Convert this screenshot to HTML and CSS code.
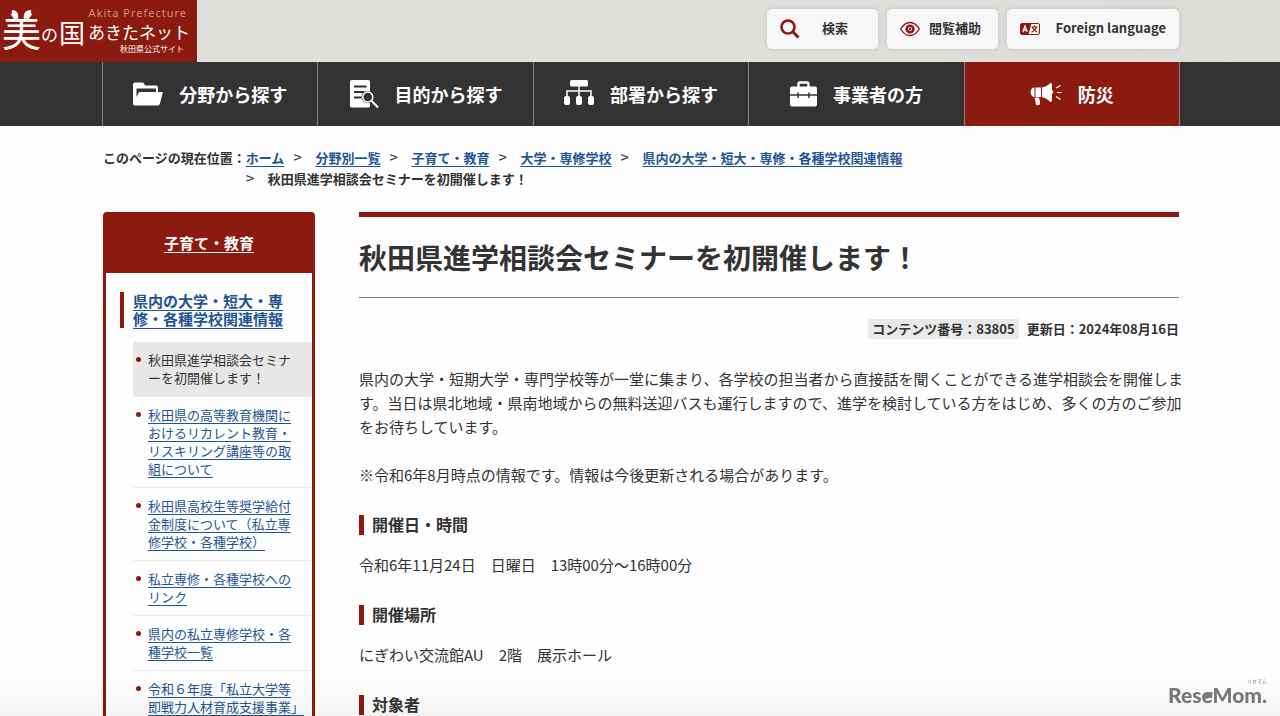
FILE: index.html
```html
<!DOCTYPE html>
<html lang="ja">
<head>
<meta charset="UTF-8">
<meta name="viewport" content="width=device-width, initial-scale=1.0">
<title>秋田県進学相談会セミナーを初開催します！</title>
<link rel="stylesheet" href="styles.css">
</head>
<body>

<header class="header">
    <a class="logo" href="#">
        <svg width="197" height="62" viewBox="0 0 197 62">
            <text class="logo-en" x="187" y="17">Akita Prefecture</text>
            <text class="logo-text" x="2" y="46" font-size="39">美</text>
            <text class="logo-text" x="41" y="41" font-size="17">の</text>
            <text class="logo-text" x="59" y="43" font-size="26">国</text>
            <text class="logo-text" x="88" y="39" font-size="17">あきたネット</text>
            <text class="logo-sub" x="120" y="52">秋田県公式サイト</text>
            <path fill="#fff" d="M12 10c5 0 7 4 6 9-5-1-7-4-6-9zM31 10c-6 0-8 4-7 9 5-1 8-4 7-9z"/>
        </svg>
    </a>
    <div class="tools">
        <button class="tool" type="button">
            <svg width="20" height="20" viewBox="0 0 20 20" fill="none" stroke="#8b1a10"><circle cx="8" cy="8" r="6.5" stroke-width="2.6"/><path d="M12.5 12.5l6 6" stroke-width="3"/></svg>
            <span>検索</span>
        </button>
        <button class="tool" type="button">
            <svg width="20" height="20" viewBox="0 0 20 20" fill="none" stroke="#8b1a10"><path d="M.7 10Q4.500 3.500 10 3.500T19.300 10Q15.500 16.500 10 16.500T.7 10z" stroke-width="1.300"/><circle cx="10" cy="10" r="3.300" stroke-width="2.600"/><circle cx="10" cy="10" r="1.200" fill="#8b1a10" stroke="none"/></svg>
            <span>閲覧補助</span>
        </button>
        <button class="tool tool-lang" type="button">
            <svg width="20" height="12" viewBox="0 0 20 12"><rect x=".5" y=".5" width="19" height="11" rx="1.500" fill="#f7f7f7" stroke="#8b1a10"/><path d="M1 .5h10.500L8.500 11.500H1z" fill="#8b1a10"/><path d="M2.800 9L5 3l2.200 6M3.600 7.200h2.800" fill="none" stroke="#fff" stroke-width="1.200"/><path d="M11.500 4h6M14.500 2.500V4M16.500 4.200Q15.500 7.500 11.500 9.200M12.500 4.200Q13.500 7.500 17.500 9.200" fill="none" stroke="#8b1a10" stroke-width="1.100"/></svg>
            <span>Foreign language</span>
        </button>
    </div>
</header>

<nav class="nav">
    <ul class="nav-list">
        <li><a href="#">
            <svg width="30" height="24" viewBox="0 0 30 24"><path fill="#fff" d="M0 2.500Q0 .5 2 .5h7.500q1 0 1.500 1l1 2h11q2 0 2 2V10h-2V6.500H3.500V15L6 10h23.500q.5 0 .3.600L27 21.500q-.5 2-2.500 2H2q-2 0-2-2z"/></svg>
            <span>分野から探す</span></a></li>
        <li><a href="#">
            <svg width="30" height="30" viewBox="0 0 30 30"><path fill="#fff" d="M2.500 1h17Q21 1 21 2.500v10a6 6 0 0 0-5 11l5 .8V27q0 1.500-1.500 1.500h-17Q1 28.500 1 27V2.500Q1 1 2.500 1z"/><path d="M5 7.500h12.500M5 13h10M5 18.500h7.500" stroke="#333" stroke-width="1.800"/><circle cx="18.800" cy="18" r="5" fill="#333" stroke="#fff" stroke-width="1.500"/><path d="M22.500 21.700l6.500 6.800" stroke="#fff" stroke-width="2"/></svg>
            <span>目的から探す</span></a></li>
        <li><a href="#">
            <svg width="30" height="30" viewBox="0 0 30 30"><g fill="#fff"><rect x="6" y="1" width="18" height="6.500" rx="1.500"/><rect x="0" y="17" width="6" height="9" rx="2"/><rect x="12" y="17" width="6" height="9" rx="2"/><rect x="24" y="17" width="6" height="9" rx="2"/></g><path d="M3 17v-5h24v5M15 7v10" fill="none" stroke="#fff" stroke-width="1.500"/></svg>
            <span>部署から探す</span></a></li>
        <li><a href="#">
            <svg width="27" height="26" viewBox="0 0 27 26"><path fill="none" stroke="#fff" stroke-width="2.400" d="M8.500 6V3q0-1.500 1.500-1.500h7q1.500 0 1.500 1.500v3"/><rect x="0" y="5.500" width="27" height="20" rx="2" fill="#fff"/><path d="M0 14h27M8 11.500v5.500M19 11.500v5.500" stroke="#333" stroke-width="1.500"/></svg>
            <span>事業者の方</span></a></li>
        <li class="nav-alert"><a href="#">
            <svg width="32" height="24" viewBox="0 0 32 24"><path fill="#fff" d="M4.500 5.500Q1 5.500.5 10q.5 5 4 5zM5.500 5.500h5.500v9.500H5.500zM12 5.500Q17 4.500 20.500 1q1.500 0 1.500 1v6q2.500 2 0 4v6.500q-.5 1.500-1.500 1.500-4-4-8.500-5zM4.500 15.500h4.500l1 4.500v2.500q-3.500 1.500-4 0z"/><path d="M26 6l4.500-2.500M27 10.500h4.500M26 14.500l4.500 3" stroke="#fff" stroke-width="1.200"/></svg>
            <span>防災</span></a></li>
    </ul>
</nav>

<div class="container">
    <div class="breadcrumb">
        <span class="breadcrumb-label">このページの現在位置：</span>
        <ol>
            <li><a href="#">ホーム</a></li>
            <li><a href="#">分野別一覧</a></li>
            <li><a href="#">子育て・教育</a></li>
            <li><a href="#">大学・専修学校</a></li>
            <li><a href="#">県内の大学・短大・専修・各種学校関連情報</a></li>
            <li>秋田県進学相談会セミナーを初開催します！</li>
        </ol>
    </div>

    <div class="columns">
        <aside class="side">
            <h2 class="side-head"><a href="#">子育て・教育</a></h2>
            <h3 class="side-sub"><a href="#">県内の大学・短大・専修・各種学校関連情報</a></h3>
            <ul class="side-list">
                <li class="current">秋田県進学相談会セミナーを初開催します！</li>
                <li><a href="#">秋田県の高等教育機関におけるリカレント教育・リスキリング講座等の取組について</a></li>
                <li><a href="#">秋田県高校生等奨学給付金制度について（私立専修学校・各種学校）</a></li>
                <li><a href="#">私立専修・各種学校へのリンク</a></li>
                <li><a href="#">県内の私立専修学校・各種学校一覧</a></li>
                <li><a href="#">令和６年度「私立大学等即戦力人材育成支援事業」</a></li>
            </ul>
        </aside>

        <main class="article">
            <h1>秋田県進学相談会セミナーを初開催します！</h1>
            <div class="meta">
                <span class="meta-number">コンテンツ番号：83805</span>
                <span>更新日：2024年08月16日</span>
            </div>
            <p class="lead">県内の大学・短期大学・専門学校等が一堂に集まり、各学校の担当者から直接話を聞くことができる進学相談会を開催しま<br>す。当日は県北地域・県南地域からの無料送迎バスも運行しますので、進学を検討している方をはじめ、多くの方のご参加<br>をお待ちしています。</p>
            <p>※令和6年8月時点の情報です。情報は今後更新される場合があります。</p>
            <h2>開催日・時間</h2>
            <p>令和6年11月24日　日曜日　13時00分～16時00分</p>
            <h2>開催場所</h2>
            <p>にぎわい交流館AU　2階　展示ホール</p>
            <h2>対象者</h2>
        </main>
    </div>
</div>

<div class="watermark">
    <span class="watermark-ruby">リセマム</span>
    <span class="watermark-name">ReseMom.</span>
</div>

</body>
</html>
```
FILE: styles.css
```css
* {
    box-sizing: border-box;
}
body {
    height: 100vh;
    margin: 0;
    overflow: hidden;
    font-family: "Noto Sans CJK JP", sans-serif;
    font-size: 15px;
    line-height: 24px;
    color: #333;
    background-color: #fdfdfd;
}
h1, h2, h3, p, ul, ol {
    margin: 0;
    padding: 0;
}
ul, ol {
    list-style: none;
}
a {
    color: #1f5593;
    text-underline-offset: 3px;
}
svg {
    display: block;
    flex: none;
}

/* Header */
.header {
    display: flex;
    justify-content: space-between;
    padding-right: 101px;
    background: linear-gradient(90deg, #dfdfdc, #e0dfdb 60%, #dddcd8);
}
.logo {
    background-color: #8b1a10;
}
.logo-en {
    font-family: "Noto Sans", sans-serif;
    font-size: 11px;
    letter-spacing: 1px;
    text-anchor: end;
    fill: #d08f88;
}
.logo-text {
    font-weight: 400;
    fill: #fff;
}
.logo-sub {
    font-size: 8px;
    fill: #fff;
}
.tools {
    display: flex;
    align-items: flex-start;
    gap: 9px;
    padding-top: 9px;
}
.tool {
    display: flex;
    align-items: center;
    gap: 9px;
    width: 111px;
    height: 40px;
    padding: 0 17px 0 13px;
    border: 0;
    border-radius: 5px;
    background-color: #f7f7f7;
    box-shadow: 0 0 5px rgba(0, 0, 0, 0.12);
    font-family: inherit;
    font-size: 13px;
    font-weight: bold;
    color: #333;
}
.tool span {
    flex: 1;
    padding-bottom: 3px;
    text-align: center;
    white-space: nowrap;
}
.tool-lang {
    width: 172px;
    padding-right: 13px;
}
.tool-lang span {
    text-align: right;
}

/* Global navigation */
.nav {
    padding: 0 100px 0 102px;
    background-color: #333;
}
.nav-list {
    display: flex;
    border-left: 1px solid #85857f;
}
.nav-list li {
    flex: 1;
    border-right: 1px solid #85857f;
}
.nav-list a {
    display: flex;
    align-items: center;
    justify-content: center;
    gap: 16px;
    height: 64px;
    font-size: 18px;
    font-weight: bold;
    color: #fff;
    text-decoration: none;
}
.nav-list .nav-alert {
    background-color: #8b1a10;
}

.container {
    padding: 21px 101px 0 103px;
}

/* Breadcrumb */
.breadcrumb {
    display: flex;
    font-size: 13px;
    font-weight: bold;
    line-height: 21px;
}
.breadcrumb-label {
    flex: none;
}
.breadcrumb ol {
    display: flex;
    flex-wrap: wrap;
    max-width: 720px;
}
.breadcrumb li + li::before {
    content: ">";
    display: inline-block;
    width: 22px;
    padding-left: 9px;
    font-size: 15px;
    font-weight: normal;
    line-height: 16px;
}
.breadcrumb li:last-child::before {
    padding-left: 0;
}

.columns {
    display: flex;
    align-items: flex-start;
    gap: 44px;
    margin-top: 23px;
}

/* Side menu */
.side {
    flex: none;
    width: 212px;
    border: 3px solid #8b1a10;
    border-radius: 4px;
}
.side-head {
    padding: 16px 0 18px;
    background-color: #8b1a10;
    font-size: 15px;
    text-align: center;
}
.side-head a {
    color: #fff;
}
.side-sub {
    margin: 19px 26px 14px 14px;
    padding-left: 9px;
    border-left: 4px solid #8b1a10;
    font-size: 15px;
    line-height: 18px;
}
.side-list {
    margin-left: 27px;
    font-size: 13px;
    line-height: 18px;
}
.side-list li {
    position: relative;
    padding: 9px 12px 9px 15px;
    border-bottom: 1px solid #ececec;
}
.side-list li::before {
    content: "";
    position: absolute;
    top: 15px;
    left: 3px;
    width: 5px;
    height: 5px;
    border-radius: 50%;
    background-color: #8b1a10;
}
.side-list .current {
    background-color: #e7e7e7;
}

/* Article */
.article {
    flex: 1;
    min-width: 0;
    border-top: 5px solid #8b1a10;
}
.article h1 {
    padding: 20px 0;
    border-bottom: 1px solid #8f7472;
    font-size: 28px;
    line-height: 40px;
}
.meta {
    display: flex;
    justify-content: flex-end;
    gap: 8px;
    margin: 21px 0 28px;
    font-size: 13px;
    font-weight: bold;
    line-height: 20px;
}
.meta-number {
    padding: 0 4px;
    background-color: #e9e9e9;
}
.lead {
    white-space: nowrap;
}
.lead + p {
    margin-top: 24px;
}
.article h2 {
    margin: 28px 0 18px;
    padding: 0 0 2px 8px;
    border-left: 5px solid #8b1a10;
    font-size: 16px;
    line-height: 18px;
}

.watermark {
    position: fixed;
    right: 0;
    bottom: 0;
    left: 0;
    display: flex;
    flex-direction: column;
    align-items: flex-end;
    gap: 2px;
    padding: 0 13px 12px 0;
    color: #777;
    background: linear-gradient(rgba(0, 0, 0, 0), rgba(0, 0, 0, 0.04));
}
.watermark-ruby {
    font-size: 5px;
    line-height: 6px;
}
.watermark-name {
    position: relative;
    font-family: Lato, sans-serif;
    font-size: 21px;
    font-weight: 900;
    line-height: 18px;
}
/* leaf over the second "e" */
.watermark-name::after {
    content: "";
    position: absolute;
    top: 6px;
    left: 36px;
    width: 9px;
    height: 7px;
    border-radius: 100% 0;
    background-color: #777;
}
```
